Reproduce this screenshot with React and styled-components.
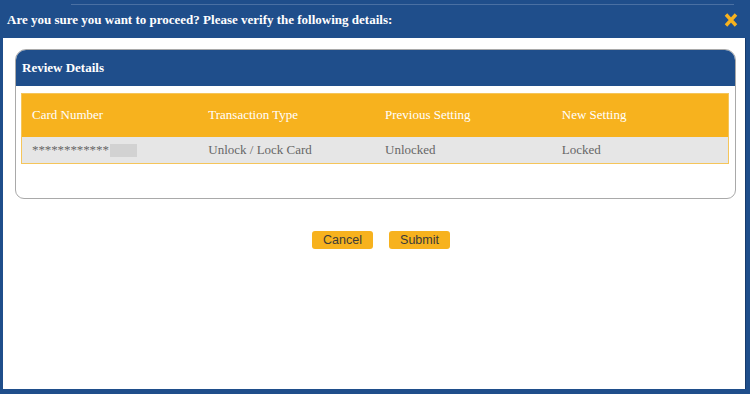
import React from "react";
import styled, { createGlobalStyle } from "styled-components";

const Global = createGlobalStyle`
  html, body { margin: 0; padding: 0; }
  body { background: #1f4e8b; width: 750px; height: 394px; overflow: hidden; }
`;

const Dialog = styled.div`
  width: 750px;
  height: 394px;
  box-sizing: border-box;
  display: flex;
  flex-direction: column;
  background: #1f4e8b;
  padding: 0 4px 5px 3px;
`;

const TitleBar = styled.div`
  position: relative;
  height: 38px;
  flex: none;
  display: flex;
  align-items: center;
  justify-content: space-between;
  padding: 0 8px 0 4px;
  &::before {
    content: "";
    position: absolute;
    left: 68px;
    right: 12px;
    top: 4px;
    height: 1px;
    background: #5d7fae;
    opacity: 0.7;
  }
`;

const Title = styled.h1`
  margin: 0;
  font-family: "Liberation Serif", "Times New Roman", serif;
  font-weight: bold;
  font-size: 13px;
  color: #ffffff;
  padding-top: 2px;
`;

const Close = styled.button`
  border: none;
  background: none;
  padding: 0;
  width: 14px;
  height: 14px;
  cursor: pointer;
  display: flex;
  margin-top: 2px;
`;

const Body = styled.div`
  flex: 1;
  background: #ffffff;
  border-right: 1px solid #163a6b;
  padding: 11px 9px 0 12px;
  display: flex;
  flex-direction: column;
  align-items: stretch;
`;

const Panel = styled.section`
  height: 150px;
  box-sizing: border-box;
  border: 1px solid #a9a9a9;
  border-radius: 11px 11px 9px 9px;
  overflow: hidden;
  background: #fff;
`;

const PanelHeader = styled.div`
  height: 36px;
  background: #1f4e8b;
  display: flex;
  align-items: center;
  padding-left: 6px;
  font-family: "Liberation Serif", "Times New Roman", serif;
  font-weight: bold;
  font-size: 13px;
  color: #fff;
`;

const PanelBody = styled.div`
  padding: 7px 6px 0 5px;
`;

const Table = styled.table`
  width: 100%;
  border-collapse: collapse;
  table-layout: fixed;
  font-family: "Liberation Serif", "Times New Roman", serif;
  font-size: 13px;
  border: 1px solid #f5c55a;
`;

const Th = styled.th`
  background: #f7b21e;
  color: #ffffff;
  font-weight: normal;
  text-align: left;
  height: 43px;
  padding: 0 10px;
  box-sizing: border-box;
`;

const Td = styled.td`
  background: #e6e6e6;
  color: #666666;
  height: 27px;
  padding: 0 10px;
  box-sizing: border-box;
`;

const Masked = styled.span`
  display: inline-block;
  width: 27px;
  height: 13px;
  vertical-align: -3px;
  background: #d2d2d2;
  margin-left: 1px;
`;

const Stars = styled.span`
  letter-spacing: -0.1px;
`;

const Actions = styled.div`
  display: flex;
  justify-content: center;
  gap: 16px;
  margin-top: 32px;
  padding-left: 11px;
`;

const Button = styled.button`
  width: 61px;
  height: 18px;
  border: none;
  border-radius: 3px;
  background: #f7b21e;
  color: #3a3a3a;
  font-family: "Liberation Sans", Arial, sans-serif;
  font-size: 12.5px;
  padding: 0;
  cursor: pointer;
`;

const columns = ["Card Number", "Transaction Type", "Previous Setting", "New Setting"];

export default function App() {
  return (
    <>
      <Global />
      <Dialog>
        <TitleBar>
          <Title>Are you sure you want to proceed? Please verify the following details:</Title>
          <Close aria-label="Close">
            <svg width="14" height="14" viewBox="0 0 14 14">
              <path d="M2 1.5 L12 12.5 M12 1.5 L2 12.5" stroke="#f7b21e" strokeWidth="3.4" strokeLinecap="butt" />
            </svg>
          </Close>
        </TitleBar>
        <Body>
          <Panel>
            <PanelHeader>Review Details</PanelHeader>
            <PanelBody>
              <Table>
                <thead>
                  <tr>
                    {columns.map((c) => (
                      <Th key={c}>{c}</Th>
                    ))}
                  </tr>
                </thead>
                <tbody>
                  <tr>
                    <Td>
                      <Stars>************</Stars>
                      <Masked />
                    </Td>
                    <Td>Unlock / Lock Card</Td>
                    <Td>Unlocked</Td>
                    <Td>Locked</Td>
                  </tr>
                </tbody>
              </Table>
            </PanelBody>
          </Panel>
          <Actions>
            <Button>Cancel</Button>
            <Button>Submit</Button>
          </Actions>
        </Body>
      </Dialog>
    </>
  );
}
